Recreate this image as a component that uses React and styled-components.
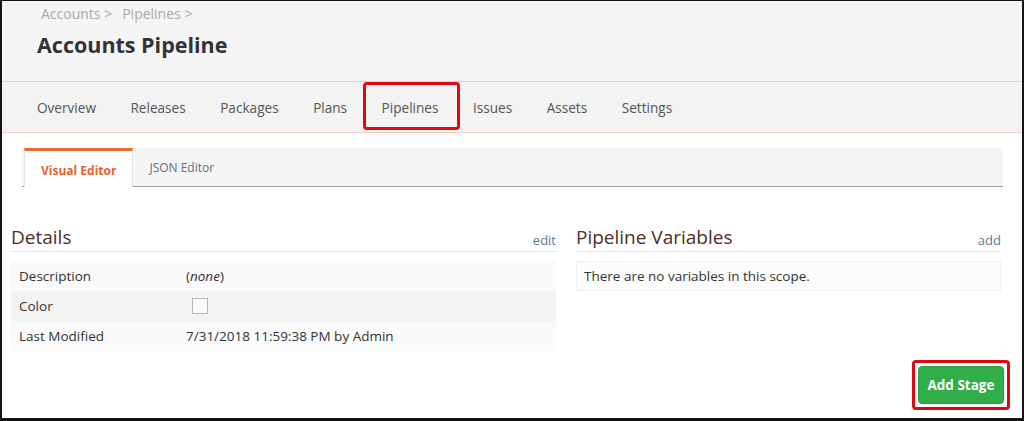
import React from 'react'
import styled, { createGlobalStyle } from 'styled-components'

const GlobalStyle = createGlobalStyle`
  html, body {
    margin: 0;
    padding: 0;
    background: #fff;
  }
  body {
    font-family: 'Open Sans', 'Noto Sans', Arial, sans-serif;
    color: #333;
  }
`

const Frame = styled.div`
  width: 1024px;
  height: 421px;
  box-sizing: border-box;
  border: 2px solid #141414;
  border-top-width: 1px;
  border-bottom-width: 3px;
  overflow: hidden;
  background: #fff;
`

const Header = styled.div`
  background: #f5f5f5;
  height: 80px;
  padding-left: 35px;
  border-bottom: 1px solid #f3cdc4;
  display: flex;
  flex-direction: column;
`

const Breadcrumb = styled.div`
  font-size: 14px;
  color: #a9a9a9;
  margin-top: 3px;
  margin-left: 4px;
  display: flex;
  gap: 10px;
`

const Title = styled.h1`
  margin: 7px 0 0;
  font-size: 21.5px;
  font-weight: 700;
  color: #333;
`

const Nav = styled.div`
  background: #f3f3f3;
  height: 50px;
  border-bottom: 1px solid #f3cdc4;
  display: flex;
  align-items: center;
  padding-left: 35px;
  gap: 34.5px;
`

const NavItem = styled.div`
  position: relative;
  font-size: 13.6px;
  color: #555;
  ${(p) =>
    p.$marked &&
    `
    &::after {
      content: '';
      position: absolute;
      left: -19px;
      right: -22px;
      top: -16px;
      bottom: -13px;
      border: 3px solid #e0070e;
      border-radius: 4px;
    }
  `}
`

const Body = styled.div`
  padding: 15px 19px 0 9px;
`

const Tabs = styled.div`
  margin-left: 11px;
  height: 38px;
  background: #f5f5f5;
  border-bottom: 1px solid #93a1ad;
  display: flex;
  align-items: flex-end;
  padding-left: 2px;
`

const Tab = styled.div`
  box-sizing: border-box;
  padding: 0 16px;
  display: flex;
  align-items: center;
  font-size: 12px;
  ${(p) =>
    p.$active
      ? `
    background: #fff;
    color: #e8602c;
    font-weight: 700;
    border-top: 3px solid #ea6a35;
    border-left: 1px solid #e3e3e3;
    border-right: 1px solid #e3e3e3;
    margin-bottom: -1px;
    height: 39px;
    padding-top: 2px;
  `
      : `
    color: #5f6e7c;
    height: 38px;
  `}
`

const Columns = styled.div`
  display: grid;
  grid-template-columns: 545px 425px;
  gap: 20px;
  margin-top: 37px;
`

const SectionHead = styled.div`
  display: flex;
  justify-content: space-between;
  align-items: flex-end;
  border-bottom: 1px solid #e6e6e6;
  padding-bottom: 1px;
`

const SectionTitle = styled.h2`
  margin: 0;
  font-size: 19px;
  font-weight: 400;
  color: #4e2e24;
`

const SectionLink = styled.a`
  font-size: 13px;
  color: #5b7896;
  text-decoration: none;
  margin-bottom: 1px;
`

const Table = styled.div`
  margin-top: 9px;
  display: flex;
  flex-direction: column;
`

const Row = styled.div`
  display: grid;
  grid-template-columns: 167px 1fr;
  height: 30px;
  align-items: center;
  padding-left: 8px;
  font-size: 13.5px;
  color: #333;
  background: ${(p) => (p.$alt ? '#f3f3f3' : '#fafafa')};
`

const Checkbox = styled.span`
  display: block;
  width: 14px;
  height: 14px;
  border: 1px solid #b5b5b5;
  background: #fbfbfb;
  margin-left: 6px;
`

const Empty = styled.div`
  margin-top: 9px;
  height: 30px;
  box-sizing: border-box;
  border: 1px solid #f1f1f1;
  background: #fcfcfc;
  display: flex;
  align-items: center;
  padding-left: 7px;
  font-size: 13.5px;
  color: #333;
`

const Actions = styled.div`
  display: flex;
  justify-content: flex-end;
  margin-top: 9px;
  margin-right: -7px;
`

const Marked = styled.div`
  border: 3px solid #e0070e;
  border-radius: 4px;
  padding: 3px;
  display: flex;
`

const Button = styled.button`
  background: #2fae4a;
  border: 1px solid #2a9d43;
  border-radius: 4px;
  color: #fff;
  font-family: inherit;
  font-weight: 700;
  font-size: 13.5px;
  height: 38px;
  width: 86px;
  padding: 0;
  cursor: pointer;
`

export default function App() {
  return (
    <>
      <GlobalStyle />
      <Frame>
        <Header>
          <Breadcrumb>
            <span>Accounts &gt;</span>
            <span>Pipelines &gt;</span>
          </Breadcrumb>
          <Title>Accounts Pipeline</Title>
        </Header>
        <Nav>
          {['Overview', 'Releases', 'Packages', 'Plans', 'Pipelines', 'Issues', 'Assets', 'Settings'].map((n) => (
            <NavItem key={n} $marked={n === 'Pipelines'}>
              {n}
            </NavItem>
          ))}
        </Nav>
        <Body>
          <Tabs>
            <Tab $active>Visual Editor</Tab>
            <Tab>JSON Editor</Tab>
          </Tabs>
          <Columns>
            <div>
              <SectionHead>
                <SectionTitle>Details</SectionTitle>
                <SectionLink href="#">edit</SectionLink>
              </SectionHead>
              <Table>
                <Row>
                  <span>Description</span>
                  <span>
                    (<i>none</i>)
                  </span>
                </Row>
                <Row $alt>
                  <span>Color</span>
                  <span>
                    <Checkbox />
                  </span>
                </Row>
                <Row>
                  <span>Last Modified</span>
                  <span>7/31/2018 11:59:38 PM by Admin</span>
                </Row>
              </Table>
            </div>
            <div>
              <SectionHead>
                <SectionTitle>Pipeline Variables</SectionTitle>
                <SectionLink href="#">add</SectionLink>
              </SectionHead>
              <Empty>There are no variables in this scope.</Empty>
            </div>
          </Columns>
          <Actions>
            <Marked>
              <Button>Add Stage</Button>
            </Marked>
          </Actions>
        </Body>
      </Frame>
    </>
  )
}
